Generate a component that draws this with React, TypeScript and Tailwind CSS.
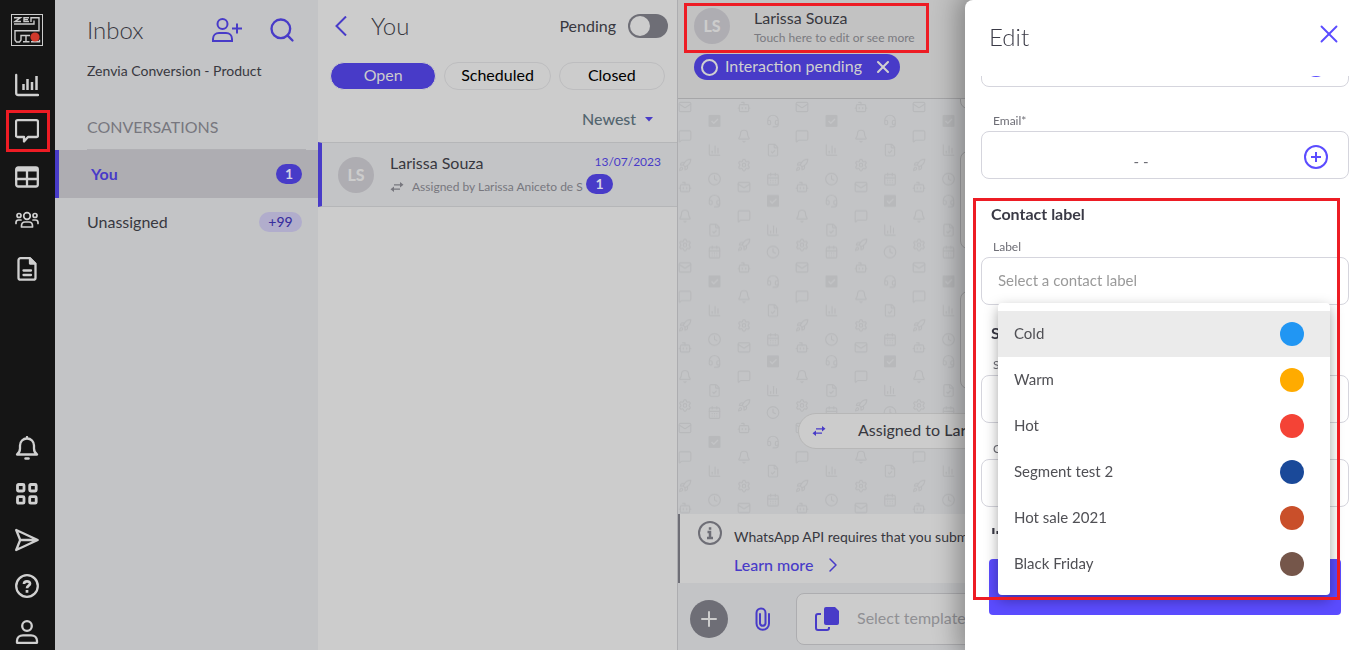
import { useState } from "react";
import type { ReactNode } from "react";
import {
  Bell,
  Bot,
  CalendarDays,
  ChartColumn,
  ChevronRight,
  Clock,
  FileCheck,
  Headset,
  Mail,
  MessageSquare,
  Plus,
  Rocket,
  Search,
  Settings,
  X,
} from "lucide-react";

const LABELS = [
  { name: "Cold", color: "bg-[#2196f3]" },
  { name: "Warm", color: "bg-[#ffab00]" },
  { name: "Hot", color: "bg-[#f44336]" },
  { name: "Segment test 2", color: "bg-[#1a4999]" },
  { name: "Hot sale 2021", color: "bg-[#c94f2a]" },
  { name: "Black Friday", color: "bg-[#75564a]" },
];

const TABS = ["Open", "Scheduled", "Closed"];

// One tile of the chat wallpaper, column by column
const WALLPAPER = [
  [Mail, 7, 8], [MessageSquare, 7, 37], [Rocket, 7, 66], [Bot, 7, 88], [Bell, 7, 117], [Settings, 7, 146],
  [ChartColumn, 36.5, 51], [Clock, 36.5, 80], [Headset, 36.5, 102], [FileCheck, 36.5, 131], [CalendarDays, 36.5, 153],
  [Bot, 66, 8], [Bell, 66, 37], [Settings, 66, 66], [Mail, 66, 88], [MessageSquare, 66, 117], [Rocket, 66, 146],
  [Headset, 95, 22], [FileCheck, 95, 51], [CalendarDays, 95, 80], [ChartColumn, 95, 131], [Clock, 95, 153],
] as const;

const WALLPAPER_CHECKS = [
  [36.5, 22],
  [95, 102],
];

function Wallpaper() {
  return (
    <svg className="absolute inset-0 w-full h-full text-[#b8b9bb]" aria-hidden="true">
      <defs>
        <pattern id="chat-wallpaper" width="117" height="160.5" patternUnits="userSpaceOnUse">
          {WALLPAPER.map(([Icon, x, y], i) => (
            <Icon key={i} x={x - 7} y={y - 7} width={14} height={14} strokeWidth={2} />
          ))}
          {WALLPAPER_CHECKS.map(([x, y]) => (
            <g key={x} transform={`translate(${x - 6} ${y - 6})`}>
              <rect width="12" height="12" rx="1" fill="currentColor" />
              <path d="M3 6l2.200 2.200L9.500 4" fill="none" stroke="#c3c4c6" strokeWidth="1.300" />
            </g>
          ))}
        </pattern>
      </defs>
      <rect width="100%" height="100%" fill="url(#chat-wallpaper)" />
    </svg>
  );
}

function Logo() {
  return (
    <svg className="w-8 h-8" viewBox="0 0 32 32" fill="none" stroke="#cccccc">
      <rect x="0.5" y="0.5" width="31" height="31" />
      <path
        strokeWidth="1.400"
        d="M3 3.700h6.500L4 7.500h6M18 3.700h-5v3.800h5M13 5.600h4M20 8V3.700h8v13H4V26l1.500 2h3l1.500-2v-4.500h9M3 10h20V6.500M15 21.500v6M12 27.700h6.500M20 27.700h8.500v-2"
      />
      <circle cx="24" cy="23" r="4.600" fill="#cf3a2c" stroke="none" />
    </svg>
  );
}

function TransferIcon({ className }: { className: string }) {
  return (
    <svg className={className} viewBox="0 0 14 10" fill="none" stroke="currentColor" strokeWidth="1.300">
      <path d="M4 2.800h7M3 7.200h7" />
      <path fill="currentColor" stroke="none" d="M10 0l3.500 2.800L10 5.500zM4 4.500L.5 7.200 4 10z" />
    </svg>
  );
}

function RailIcon({ children }: { children: ReactNode }) {
  return (
    <svg
      className="w-6 h-6"
      viewBox="0 0 24 24"
      fill="none"
      stroke="currentColor"
      strokeWidth="2.300"
      strokeLinejoin="round"
      strokeLinecap="round"
    >
      {children}
    </svg>
  );
}

const TOP_NAV = [
  {
    label: "Dashboard",
    icon: (
      <RailIcon>
        <path d="M1.200 2v18a2 2 0 002 2H23" />
        <path strokeWidth="2.500" strokeLinecap="butt" d="M8.500 17v-6M12.500 17V6M17 17V9M21.500 17V3" />
      </RailIcon>
    ),
  },
  {
    label: "Inbox",
    highlighted: true,
    icon: (
      <RailIcon>
        <path d="M2.500 1.200h19A1.500 1.500 0 0123 2.500v14a1.500 1.500 0 01-1.500 1.500H13l-4 4.500v-4.500h-6.500A1.500 1.500 0 011 16.500v-14A1.500 1.500 0 012.500 1.200z" />
      </RailIcon>
    ),
  },
  {
    label: "Tables",
    icon: (
      <RailIcon>
        <rect x="1.200" y="2.500" width="21.600" height="19" rx="2" />
        <path strokeWidth="4" strokeLinecap="butt" d="M1 4.500h22" />
        <path d="M12 4v17M1 14h22" />
      </RailIcon>
    ),
  },
  {
    label: "Teams",
    icon: (
      <RailIcon>
        <g strokeWidth="1.700" transform="translate(0 -2.500)">
          <circle cx="12" cy="7.500" r="3.300" />
          <circle cx="4" cy="7" r="2" />
          <circle cx="20" cy="7" r="2" />
          <path d="M6.500 18.500v-1c0-2.500 1.500-4 3.500-4h4c2 0 3.500 1.500 3.500 4v1zM1 15v-1c0-1.500 1-2.500 2.500-2.500H6M23 15v-1c0-1.500-1-2.500-2.500-2.500H18" />
        </g>
      </RailIcon>
    ),
  },
  {
    label: "Documents",
    icon: (
      <RailIcon>
        <path d="M5.500 1.200H15l5.500 5.500v14a2 2 0 01-2 2h-13a2 2 0 01-2-2v-17.500a2 2 0 012-2z" />
        <path fill="currentColor" d="M15 1.500v5h5z" />
        <path d="M8.500 13.500h7.500M8.500 18h7.500" />
      </RailIcon>
    ),
  },
];

const BOTTOM_NAV = [
  {
    label: "Notifications",
    icon: (
      <RailIcon>
        <path d="M12 1v1.500M2 18.500c2-1.500 3-3 3-6v-3c0-4 3-7 7-7s7 3 7 7v3c0 3 1 4.500 3 6z" />
        <path d="M10.500 22.500h3" strokeWidth="2.500" />
      </RailIcon>
    ),
  },
  {
    label: "Apps",
    icon: (
      <RailIcon>
        <g strokeWidth="2.800">
          <rect x="2.500" y="2.500" width="6.500" height="6.500" rx="1" />
          <rect x="14.700" y="2.500" width="6.500" height="6.500" rx="1" />
          <rect x="2.500" y="14.700" width="6.500" height="6.500" rx="1" />
          <rect x="14.700" y="14.700" width="6.500" height="6.500" rx="1" />
        </g>
      </RailIcon>
    ),
  },
  {
    label: "Campaigns",
    icon: (
      <RailIcon>
        <path d="M1.200 2l21.500 10L1.200 22l4-10zM5 12h17" />
      </RailIcon>
    ),
  },
  {
    label: "Help",
    icon: (
      <RailIcon>
        <circle cx="12" cy="12" r="10.800" />
        <path strokeWidth="2.700" strokeLinecap="butt" d="M9 10c0-3.500 6-3.500 6-.3 0 2-3 2-3 4.500M12 16v2.700" />
      </RailIcon>
    ),
  },
  {
    label: "Account",
    icon: (
      <RailIcon>
        <circle cx="12" cy="6" r="4.800" />
        <path d="M2 22.800v-2c0-3.300 2.500-5.500 6-5.500h8c3.500 0 6 2.200 6 5.500v2z" />
      </RailIcon>
    ),
  },
];

function Rail() {
  return (
    <nav className="w-[55px] shrink-0 bg-[#151515] text-[#d0d0d0] flex flex-col items-center justify-between pt-3.5 pr-px pb-1.5">
      <div className="flex flex-col items-center">
        <Logo />
        <div className="flex flex-col items-center gap-[22px] pt-[27px]">
          {TOP_NAV.map((item) => (
            <a key={item.label} href="#" aria-label={item.label} className="relative block">
              {item.icon}
              {item.highlighted && (
                <span className="absolute -left-[9px] -right-[11px] -inset-y-[9px] border-3 border-[#ed1c24]" />
              )}
            </a>
          ))}
        </div>
      </div>
      <div className="flex flex-col items-center gap-[22px]">
        {BOTTOM_NAV.map((item) => (
          <a key={item.label} href="#" aria-label={item.label}>
            {item.icon}
          </a>
        ))}
      </div>
    </nav>
  );
}

function Folders() {
  return (
    <aside className="w-[263px] shrink-0 bg-[#c3c4c6] text-[#38383f]">
      <div className="flex items-center pl-8 pr-[22px] pt-3.5">
        <h1 className="flex-1 text-2xl leading-8 font-light">Inbox</h1>
        <button aria-label="Add contact" className="text-[#483bc8] mr-[26px]">
          <svg className="w-[30px] h-6" viewBox="0 0 30 24" fill="none" stroke="currentColor" strokeWidth="2">
            <circle cx="10.500" cy="6" r="5" />
            <path d="M1 23v-2c0-3.500 2.500-6 6-6h7c3.500 0 6 2.500 6 6v2zM20 10.500h10M25 5.500v10" />
          </svg>
        </button>
        <button aria-label="Search" className="text-[#483bc8]">
          <Search className="w-7 h-7" strokeWidth={2} />
        </button>
      </div>
      <p className="pl-8 mt-[15px] text-sm leading-5">Zenvia Conversion - Product</p>
      <div className="ml-8 mr-3 mt-[34px] pb-2.5 border-b border-[#b0b0b4]">
        <h2 className="text-base leading-6 text-[#77777e]">CONVERSATIONS</h2>
      </div>
      <a href="#" className="flex items-center justify-between h-12 pl-8 pr-4 border-l-4 border-[#483bc8] bg-[#aeadb2]">
        <span className="font-bold text-[#483bc8]">You</span>
        <span className="w-[26px] h-5 rounded-full bg-[#483bc8] text-[#d4d3e4] text-sm leading-5 font-bold text-center">1</span>
      </a>
      <a href="#" className="flex items-center justify-between h-12 pl-8 pr-4">
        <span>Unassigned</span>
        <span className="w-[43px] h-5 rounded-full bg-[#b1adcc] text-[#3a2f9e] text-sm leading-5 font-medium text-center">+99</span>
      </a>
    </aside>
  );
}

function Avatar() {
  return (
    <span className="w-9 h-9 shrink-0 rounded-full bg-[#aeadb2] text-[#cccccc] text-base font-black flex items-center justify-center">
      LS
    </span>
  );
}

function ConversationList() {
  const [tab, setTab] = useState("Open");

  return (
    <section className="w-[360px] shrink-0 bg-[#cccccc] text-[#38383f] border-r border-[#adadb0]">
      <div className="flex items-center px-[9px] pt-2.5">
        <button aria-label="Back" className="text-[#483bc8] px-2">
          <svg className="w-3 h-5" viewBox="0 0 12 20" fill="none" stroke="currentColor" strokeWidth="2">
            <path d="M11 0.500L1.500 10l9.500 9.500" />
          </svg>
        </button>
        <h2 className="flex-1 pl-4 text-2xl leading-8 font-light">You</h2>
        <label htmlFor="pending" className="mr-3">Pending</label>
        <input
          id="pending"
          type="checkbox"
          role="switch"
          className="appearance-none w-10 h-6 p-0.5 rounded-full bg-[#6e6e76] before:block before:w-5 before:h-5 before:rounded-full before:bg-[#cccccc] checked:before:translate-x-4"
        />
      </div>
      <div className="flex gap-2 px-3 mt-5">
        {TABS.map((t) => (
          <button
            key={t}
            onClick={() => setTab(t)}
            className={`flex-1 h-7 pb-0.5 rounded-full border text-base leading-6 ${
              tab === t ? "bg-[#483bc8] border-[#cccccc] text-[#cccccc]" : "border-[#bdbdbf] text-black"
            }`}
          >
            {t}
          </button>
        ))}
      </div>
      <div className="flex items-center justify-end gap-2 mt-[17px] pr-6 text-[#53656f]">
        <select aria-label="Sort order" className="appearance-none bg-transparent text-base leading-6 font-medium">
          <option>Newest</option>
          <option>Oldest</option>
        </select>
        <svg className="w-2 h-1.5" viewBox="0 0 8 6" fill="#483bc8">
          <path d="M0 1h8L4 5.500z" />
        </svg>
      </div>
      <a
        href="#"
        className="flex items-center h-[65px] mt-[11px] border-y border-y-[#b5b6b8] border-l-4 border-l-[#483bc8] bg-[#c3c4c6] px-4"
      >
        <Avatar />
        <div className="flex-1 min-w-0 pl-4">
          <p className="text-base leading-6">Larissa Souza</p>
          <p className="flex items-center gap-2 text-xs leading-6 text-[#77777e]">
            <TransferIcon className="w-3.5 h-2.5 shrink-0" />
            <span className="overflow-hidden whitespace-nowrap">Assigned by Larissa Aniceto de S</span>
          </p>
        </div>
        <div className="w-[75px] shrink-0 flex flex-col pb-1">
          <time className="self-end text-xs leading-5 text-[#483bc8]">13/07/2023</time>
          <span className="w-[27px] h-5 mt-0.5 rounded-full bg-[#483bc8] text-[#d4d3e4] text-sm leading-5 font-bold text-center">1</span>
        </div>
      </a>
    </section>
  );
}

function Chat() {
  return (
    <main className="flex-1 min-w-0 flex flex-col bg-[#c3c4c6] text-[#38383f]">
      <header className="h-[99px] shrink-0 bg-[#c2c2c2] border-b border-[#a6a6a8] pl-4 pt-1.5">
        <button className="relative flex items-center text-left">
          <Avatar />
          <span className="pl-6 pr-3.5">
            <span className="block text-base leading-6">Larissa Souza</span>
            <span className="block text-xs leading-4 text-[#7a7a80]">Touch here to edit or see more</span>
          </span>
          <span className="absolute -left-2.5 right-0 -top-[3px] -bottom-[7px] border-3 border-[#ed1c24]" />
        </button>
        <div className="inline-flex items-center h-[26px] mt-2 px-[7px] rounded-full bg-[#483bc8] text-[#d0d0d0]">
          <span className="w-[17px] h-[17px] rounded-full border-2 border-current" />
          <span className="pl-[7px] pr-[11px] pb-0.5">Interaction pending</span>
          <button aria-label="Clear filter">
            <X className="w-5 h-5" strokeWidth={2.5} />
          </button>
        </div>
      </header>

      <div className="relative flex-1 min-h-0 overflow-hidden">
        <Wallpaper />
        <div className="relative h-full flex flex-col justify-end pb-[65px]">
          <div className="self-end w-[380px] h-[98px] mr-4 shrink-0 rounded-lg border border-[#a6a6a8] bg-[#c8c8c8]" />
          <div className="self-end w-[380px] h-[98px] mr-4 mt-[42px] shrink-0 rounded-lg border border-[#a6a6a8] bg-[#c8c8c8]" />
          <div className="self-end w-[380px] h-[98px] mr-4 mt-[42px] shrink-0 rounded-lg border border-[#a6a6a8] bg-[#c8c8c8]" />
          <div className="self-center w-[438px] h-9 mt-6 pl-[13px] shrink-0 flex items-center rounded-full border border-[#b7b7b7] bg-[#cccccc]">
            <TransferIcon className="w-3.5 h-2.5 text-[#483bc8]" />
            <p className="pl-8 pb-0.5">
              Assigned to <span className="font-medium">Larissa Aniceto de Souza</span>
            </p>
          </div>
        </div>
      </div>

      <div className="h-[69px] shrink-0 flex border-l-2 border-[#6e6e76] bg-[#cccccc] pl-[18px] pt-[7px]">
        <svg className="w-6 h-6 shrink-0 text-[#6e6e76]" viewBox="0 0 24 24" fill="none" stroke="currentColor" strokeWidth="2">
          <circle cx="12" cy="12" r="11" />
          <path strokeWidth="2.500" d="M9.500 11H12v6M9 17h6M10.800 7.500h2.500" />
        </svg>
        <div className="pl-3 pt-1">
          <p className="text-sm leading-6 whitespace-nowrap">WhatsApp API requires that you submit a template first</p>
          <a href="#" className="flex items-center gap-2 leading-8 font-medium text-[#483bc8]">
            Learn more
            <ChevronRight className="w-6 h-6" strokeWidth={1.5} />
          </a>
        </div>
      </div>

      <footer className="h-[67px] shrink-0 flex items-center pl-3 pt-1">
        <button aria-label="Add" className="w-[38px] h-[38px] rounded-full bg-[#6e6e76] text-[#cccccc] flex items-center justify-center">
          <Plus className="w-6 h-6" strokeWidth={2} />
        </button>
        <button aria-label="Attach file" className="text-[#483bc8] ml-6">
          <svg className="w-5 h-6" viewBox="0 0 20 24" fill="none" stroke="currentColor" strokeWidth="2" strokeLinecap="round">
            <path d="M17 7v9.500a6.200 6.200 0 01-12.500 0V6a4.500 4.500 0 019 0v10.500a2.800 2.800 0 01-5.500 0V7" />
          </svg>
        </button>
        <label className="flex-1 h-[52px] ml-6 mr-4 flex items-center pl-4 rounded-lg border border-[#adadb0] bg-[#cccccc]">
          <svg className="w-6 h-6 shrink-0 text-[#483bc8] mx-0.5" viewBox="0 0 24 24" fill="none" stroke="currentColor" strokeWidth="2">
            <path fill="currentColor" stroke="none" d="M11 0h9l4 4v12a2 2 0 01-2 2H11a2 2 0 01-2-2V2a2 2 0 012-2z" />
            <path d="M6 7H3a2 2 0 00-2 2v12a2 2 0 002 2h9a2 2 0 002-2v-1" />
          </svg>
          <input
            aria-label="Template"
            placeholder="Select template..."
            className="flex-1 min-w-0 ml-4 pb-0.5 bg-transparent outline-none placeholder:text-[#909094]"
          />
        </label>
      </footer>
    </main>
  );
}

const FIELD = "block w-full h-12 rounded-lg border border-[#d5d5dd] bg-white px-4 text-[15px] outline-none";
const FIELD_LABEL = "block pl-3 text-xs leading-5 text-[#6e6e76]";
const SECTION = "pl-2.5 text-base leading-6 font-bold text-[#3a3a46]";

function PlusCircle() {
  return (
    <svg className="w-6 h-6" viewBox="0 0 24 24" fill="none" stroke="currentColor" strokeWidth="2">
      <circle cx="12" cy="12" r="11" />
      <path d="M12 7v10M7 12h10" />
    </svg>
  );
}

function EditDrawer() {
  const [label, setLabel] = useState("");

  return (
    <div className="fixed inset-y-0 right-0 w-[391px] flex flex-col rounded-l-lg bg-white shadow-[0_0_24px_8px_rgba(0,0,0,0.3)]">
      <header className="h-[76px] shrink-0 flex items-center justify-between pl-6 pr-3 pb-1">
        <h2 className="text-2xl leading-8 font-light text-[#3a3a46] pt-0.5">Edit</h2>
        <button aria-label="Close" className="text-[#5b4cff] pb-1">
          <X className="w-[30px] h-[30px]" strokeWidth={1.5} />
        </button>
      </header>

      <div className="flex-1 min-h-0 flex flex-col overflow-hidden pl-4 pr-[7px]">
        <div className="h-[11px] shrink-0 flex flex-col justify-end overflow-hidden">
          <div className="relative shrink-0">
            <input aria-label="Phone" className={FIELD} />
            <button aria-label="Add phone" className="absolute right-[21px] top-3.5 text-[#5b4cff]">
              <PlusCircle />
            </button>
          </div>
        </div>

        <label htmlFor="email" className={`${FIELD_LABEL} mt-6`}>Email*</label>
        <div className="relative">
          <input id="email" defaultValue="- -" className={`${FIELD} text-center text-[#6e6e76] pr-16 pt-3`} />
          <button aria-label="Add email" className="absolute right-[21px] top-3.5 text-[#5b4cff]">
            <PlusCircle />
          </button>
        </div>

        <h3 className={`${SECTION} mt-[23px]`}>Contact label</h3>
        <label htmlFor="label" className={`${FIELD_LABEL} mt-[11px]`}>Label</label>
        <input
          id="label"
          role="combobox"
          aria-expanded="true"
          aria-controls="label-options"
          value={label}
          onChange={(e) => setLabel(e.target.value)}
          placeholder="Select a contact label"
          className={`${FIELD} shrink-0 pb-0.5 placeholder:text-[#9a9a9a]`}
        />

        <h3 className={`${SECTION} mt-4`}>Segmentation</h3>
        <label htmlFor="segment" className={`${FIELD_LABEL} mt-2.5`}>Segment</label>
        <input id="segment" className={`${FIELD} shrink-0`} />
        <label htmlFor="channel" className={`${FIELD_LABEL} mt-4`}>Channel</label>
        <input id="channel" className={`${FIELD} shrink-0`} />
        <h3 className={`${SECTION} mt-3.5`}>Interests</h3>
      </div>

      <footer className="h-[116px] shrink-0 bg-white pl-6 pr-[15px] pt-[25px]">
        <button aria-label="Save" className="w-full h-14 rounded bg-[#5b4cff]" />
      </footer>

      {/* Options float over the form and the save button */}
      <ul
        id="label-options"
        role="listbox"
        className="absolute z-20 left-[33px] right-[26px] top-[303px] py-2 rounded bg-white shadow-[0_5px_14px_rgba(0,0,0,0.35)] text-[#505055]"
      >
        {LABELS.map((item, i) => (
          <li key={item.name} role="option" aria-selected={item.name === label}>
            <button
              onClick={() => setLabel(item.name)}
              className={`w-full h-[46px] flex items-center justify-between pl-4 pr-[26px] text-[15px] ${
                i === 0 ? "bg-[#ebebeb]" : "hover:bg-[#ebebeb]"
              }`}
            >
              <span className="pb-0.5">{item.name}</span>
              <span className={`w-6 h-6 rounded-full ${item.color}`} />
            </button>
          </li>
        ))}
      </ul>
      <div className="absolute z-30 left-2 right-4 top-[198px] h-[402px] border-3 border-[#ed1c24] pointer-events-none" />
    </div>
  );
}

export default function App() {
  return (
    <div className="flex h-screen overflow-hidden font-['Lato','Open_Sans',sans-serif] text-base">
      <Rail />
      <Folders />
      <ConversationList />
      <Chat />
      <EditDrawer />
    </div>
  );
}
